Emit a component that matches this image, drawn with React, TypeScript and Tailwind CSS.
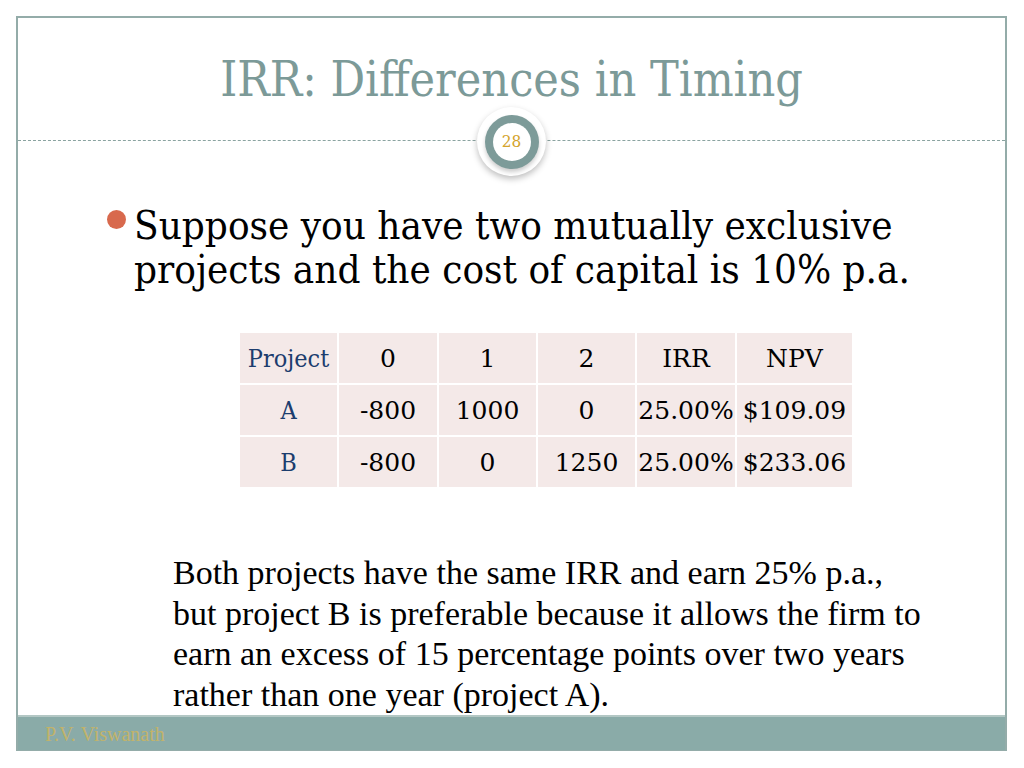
import React from "react";

const cond = { fontFamily: '"DejaVu Serif Condensed", "DejaVu Serif", serif', fontStretch: "condensed" as const };
const serif = { fontFamily: '"DejaVu Serif", serif' };
const times = { fontFamily: '"Liberation Serif", "Times New Roman", serif' };

const rows = [
  ["Project", "0", "1", "2", "IRR", "NPV"],
  ["A", "-800", "1000", "0", "25.00%", "$109.09"],
  ["B", "-800", "0", "1250", "25.00%", "$233.06"],
];

export default function App() {
  return (
    <div className="w-[1024px] h-[768px] bg-white overflow-hidden">
      <div className="ml-[16px] mt-[16px] w-[991px] h-[735px] border-2 border-[#94aca9] flex flex-col">
        <div className="h-[122px] shrink-0 flex items-start justify-center pt-[33px]">
          <h1 className="text-[48px] leading-[56px] text-[#7c9a98]" style={cond}>
            IRR: Differences in Timing
          </h1>
        </div>
        <div className="relative h-0 border-t border-dashed border-[#8aa3a0]">
          <div className="absolute left-[459px] top-[-34px] w-[69px] h-[69px] rounded-full bg-white shadow-[0_3px_6px_rgba(0,0,0,0.25)] flex items-center justify-center">
            <div className="w-[54px] h-[54px] rounded-full bg-[#7d9b99] flex items-center justify-center shadow-[0_3px_4px_rgba(0,0,0,0.2)]">
              <div
                className="w-[38px] h-[38px] rounded-full bg-white flex items-center justify-center text-[17px] text-[#d4a42c]"
                style={cond}
              >
                28
              </div>
            </div>
          </div>
        </div>
        <div className="flex-1 flex flex-col">
          <div className="flex pl-[89px] pt-[62px]">
            <div className="w-[19px] h-[19px] rounded-full bg-[#d8694d] mt-[7px] mr-[8px] shrink-0" />
            <p className="text-[40px] leading-[44px] text-black" style={cond}>
              Suppose you have two mutually exclusive
              <br />
              projects and the cost of capital is 10% p.a.
            </p>
          </div>
          <div className="pl-[222px] pt-[42px]">
            <div className="inline-grid grid-cols-[97px_98px_97px_97px_98px_115px] auto-rows-[50px] gap-[2px] bg-white">
              {rows.map((r, i) =>
                r.map((c, j) => (
                  <div
                    key={i + "-" + j}
                    className={
                      "bg-[#f4e9e8] flex items-center justify-center text-[25px] leading-[28px] pt-[2px] " +
                      (j === 0 ? "text-[#1c3d6e]" : "text-black")
                    }
                    style={j === 0 ? cond : serif}
                  >
                    {c}
                  </div>
                ))
              )}
            </div>
          </div>
          <p className="pl-[155px] pt-[66px] text-[34px] leading-[40.5px] text-black" style={times}>
            Both projects have the same IRR and earn 25% p.a.,
            <br />
            but project B is preferable because it allows the firm to
            <br />
            earn an excess of 15 percentage points over two years
            <br />
            rather than one year (project A).
          </p>
        </div>
        <div className="h-[35px] shrink-0 bg-[#8aaba8] border-t-2 border-[#b3c7c4] flex items-center pl-[27px]">
          <span className="text-[20px] text-[#c2b36a]" style={times}>
            P.V. Viswanath
          </span>
        </div>
      </div>
    </div>
  );
}
